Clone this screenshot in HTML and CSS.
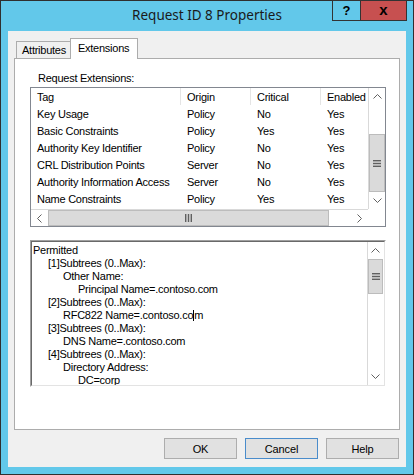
FILE: index.html
```html
<!DOCTYPE html>
<html>
<head>
<meta charset="utf-8">
<link rel="stylesheet" href="styles.css">
</head>
<body>
<div class="window">
  <div class="titlebar">
    <div></div>
    <div class="title">Request ID 8 Properties</div>
    <div class="controls">
      <div class="cbtn help">?</div>
      <div class="cbtn close">x</div>
    </div>
  </div>
  <div class="client">
    <div class="tabs">
      <div class="tab">Attributes</div>
      <div class="tab active">Extensions</div>
    </div>
    <div class="panel">
      <div class="label">Request Extensions:</div>
      <div class="listview">
        <div class="lv-content">
          <div class="lv-row lv-head"><div>Tag</div><div>Origin</div><div>Critical</div><div>Enabled</div></div>
          <div class="lv-row"><div>Key Usage</div><div>Policy</div><div>No</div><div>Yes</div></div>
          <div class="lv-row"><div>Basic Constraints</div><div>Policy</div><div>Yes</div><div>Yes</div></div>
          <div class="lv-row"><div>Authority Key Identifier</div><div>Policy</div><div>No</div><div>Yes</div></div>
          <div class="lv-row"><div>CRL Distribution Points</div><div>Server</div><div>No</div><div>Yes</div></div>
          <div class="lv-row"><div>Authority Information Access</div><div>Server</div><div>No</div><div>Yes</div></div>
          <div class="lv-row"><div>Name Constraints</div><div>Policy</div><div>Yes</div><div>Yes</div></div>
        </div>
        <div class="vscroll">
          <div class="arrow"><svg width="9" height="5" viewBox="0 0 9 5"><polyline points="0.5,4.5 4.5,0.5 8.5,4.5" fill="none" stroke="#606060" stroke-width="1"/></svg></div>
          <div class="track lv-track-top"></div>
          <div class="thumb lv-vthumb"><svg width="8" height="7" viewBox="0 0 8 7"><rect x="0" y="0" width="8" height="1.4" fill="#606060"/><rect x="0" y="2.8" width="8" height="1.4" fill="#606060"/><rect x="0" y="5.6" width="8" height="1.4" fill="#606060"/></svg></div>
          <div class="track grow"></div>
          <div class="arrow"><svg width="9" height="5" viewBox="0 0 9 5"><polyline points="0.5,0.5 4.5,4.5 8.5,0.5" fill="none" stroke="#606060" stroke-width="1"/></svg></div>
        </div>
        <div class="hscroll">
          <div class="arrow"><svg width="5" height="9" viewBox="0 0 5 9"><polyline points="4.5,0.5 0.5,4.5 4.5,8.5" fill="none" stroke="#606060" stroke-width="1"/></svg></div>
          <div class="thumb lv-hthumb"><svg width="7" height="8" viewBox="0 0 7 8"><rect x="0" y="0" width="1.4" height="8" fill="#606060"/><rect x="2.8" y="0" width="1.4" height="8" fill="#606060"/><rect x="5.6" y="0" width="1.4" height="8" fill="#606060"/></svg></div>
          <div class="track grow"></div>
          <div class="arrow"><svg width="5" height="9" viewBox="0 0 5 9"><polyline points="0.5,0.5 4.5,4.5 0.5,8.5" fill="none" stroke="#606060" stroke-width="1"/></svg></div>
        </div>
        <div class="corner"></div>
      </div>
      <div class="editbox">
        <div class="edit-inner">
          <div class="edit-text">
            <div class="l0">Permitted</div>
            <div class="l1">[1]Subtrees (0..Max):</div>
            <div class="l2">Other Name:</div>
            <div class="l3">Principal Name=.contoso.com</div>
            <div class="l1">[2]Subtrees (0..Max):</div>
            <div class="l2">RFC822 Name=.contoso.co<span class="caret"></span>m</div>
            <div class="l1">[3]Subtrees (0..Max):</div>
            <div class="l2">DNS Name=.contoso.com</div>
            <div class="l1">[4]Subtrees (0..Max):</div>
            <div class="l2">Directory Address:</div>
            <div class="l3">DC=corp</div>
          </div>
          <div class="vscroll">
            <div class="arrow"><svg width="9" height="5" viewBox="0 0 9 5"><polyline points="0.5,4.5 4.5,0.5 8.5,4.5" fill="none" stroke="#606060" stroke-width="1"/></svg></div>
            <div class="thumb ed-vthumb"><svg width="8" height="7" viewBox="0 0 8 7"><rect x="0" y="0" width="8" height="1.4" fill="#606060"/><rect x="0" y="2.8" width="8" height="1.4" fill="#606060"/><rect x="0" y="5.6" width="8" height="1.4" fill="#606060"/></svg></div>
            <div class="track grow"></div>
            <div class="arrow"><svg width="9" height="5" viewBox="0 0 9 5"><polyline points="0.5,0.5 4.5,4.5 8.5,0.5" fill="none" stroke="#606060" stroke-width="1"/></svg></div>
          </div>
        </div>
      </div>
    </div>
    <div class="buttons">
      <div class="button">OK</div>
      <div class="button default">Cancel</div>
      <div class="button">Help</div>
    </div>
  </div>
</div>
</body>
</html>
```
FILE: styles.css
```css
* { box-sizing: border-box; }
html, body { margin: 0; padding: 0; background: #62c8ea; }
body { font-family: "Liberation Sans", Arial, sans-serif; font-size: 11px; color: #000; }

.window {
  width: 414px;
  height: 475px;
  border: 1px solid #2f2f2f;
  background: #62c8ea;
  padding: 0 7px 7px 7px;
  display: flex;
  flex-direction: column;
}

.titlebar {
  height: 30px;
  display: grid;
  grid-template-columns: 1fr auto 1fr;
  align-items: start;
}
.title {
  font-family: "Noto Sans", "Open Sans", sans-serif;
  font-size: 13.5px;
  line-height: 29px;
  color: #1a1a1a;
  white-space: nowrap;
}
.controls {
  justify-self: end;
  display: flex;
  margin-top: -1px;
  margin-right: -1px;
}
.cbtn {
  height: 21px;
  border: 1px solid #333;
  display: flex;
  align-items: center;
  justify-content: center;
  font-family: "Liberation Sans", Arial, sans-serif;
  font-weight: bold;
  font-size: 13px;
  color: #000;
}
.cbtn.help { width: 29px; }
.cbtn.close { width: 47px; margin-left: -1px; background: #c75050; font-size: 15px; padding-bottom: 2px; color: #000; }

.client {
  flex: 1;
  background: #f0f0f0;
  padding: 7px 6px 0 6px;
  display: flex;
  flex-direction: column;
}

.tabs {
  height: 20px;
  display: flex;
  align-items: flex-end;
  padding-left: 2px;
}
.tab {
  height: 17px;
  border: 1px solid #acacac;
  border-bottom: none;
  background: #f0f0f0;
  padding: 0 4px 0 5px;
  line-height: 16px;
  letter-spacing: -0.25px;
}
.tab.active {
  height: 21px;
  margin-bottom: -1px;
  margin-left: -1px;
  background: #fff;
  padding: 0 8px 0 7px;
  line-height: 18px;
  position: relative;
  z-index: 1;
}

.panel {
  height: 372px;
  border: 1px solid #acacac;
  background: #fff;
  padding-left: 15px;
}
.label {
  margin: 12px 0 2px 8px;
  line-height: 14px;
  letter-spacing: -0.25px;
}

.listview {
  width: 356px;
  height: 140px;
  border: 1px solid #828790;
  display: grid;
  grid-template-columns: 1fr 17px;
  grid-template-rows: 1fr 17px;
  overflow: hidden;
}
.lv-content { overflow: hidden; }
.lv-row {
  display: grid;
  grid-template-columns: 150px 70px 70px 70px;
  height: 17px;
  line-height: 17px;
  padding-top: 1px;
  white-space: nowrap;
  letter-spacing: -0.25px;
}
.lv-row > div { padding-left: 6px; overflow: hidden; line-height: 16px; }
.lv-head { padding-top: 0; }
.lv-head > div { border-right: 1px solid #e5e5e5; line-height: 18px; }

.vscroll {
  display: flex;
  flex-direction: column;
  background: #fff;
  border-left: 1px solid #d9d9d9;
}
.hscroll {
  display: flex;
  background: #fff;
  border-top: 1px solid #d9d9d9;
}
.arrow {
  flex: none;
  width: 17px;
  height: 17px;
  display: flex;
  align-items: center;
  justify-content: center;
  background: #fff;
}
.vscroll .arrow { width: auto; }
.hscroll .arrow { height: auto; }
.track { background: #fff; }
.grow { flex: 1; }
.lv-track-top { height: 29px; flex: none; }
.thumb {
  flex: none;
  background: #dadada;
  border: 1px solid #bcbcbc;
  display: flex;
  align-items: center;
  justify-content: center;
}
.lv-vthumb { height: 58px; }
.lv-hthumb { width: 281px; }
.ed-vthumb { height: 35px; }
.corner { background: #fff; }

.editbox {
  margin-top: 13px;
  width: 356px;
  height: 147px;
  border: 1px solid;
  border-color: #a0a0a0 #fff #fff #a0a0a0;
}
.edit-inner {
  height: 100%;
  border: 1px solid;
  border-color: #696969 #e3e3e3 #e3e3e3 #696969;
  display: grid;
  grid-template-columns: 1fr 17px;
}
.edit-inner .vscroll { border-left: 1px solid #d9d9d9; border-right: 1px solid #fff; }
.edit-text {
  padding: 2px 0 0 1px;
  line-height: 13px;
  white-space: nowrap;
  overflow: hidden;
  letter-spacing: -0.25px;
}
.l1 { padding-left: 15px; }
.l2 { padding-left: 30px; }
.l3 { padding-left: 45px; }
.caret {
  display: inline-block;
  width: 1px;
  height: 11px;
  background: #000;
  vertical-align: -2px;
}

.buttons {
  margin-top: 8px;
  display: flex;
  justify-content: flex-end;
  gap: 8px;
  padding-right: 1px;
}
.button {
  width: 73px;
  height: 21px;
  border: 1px solid #adadad;
  background: #e1e1e1;
  display: flex;
  align-items: center;
  justify-content: center;
  letter-spacing: -0.1px;
}
.button.default { border-color: #4a8ccb; }
```
